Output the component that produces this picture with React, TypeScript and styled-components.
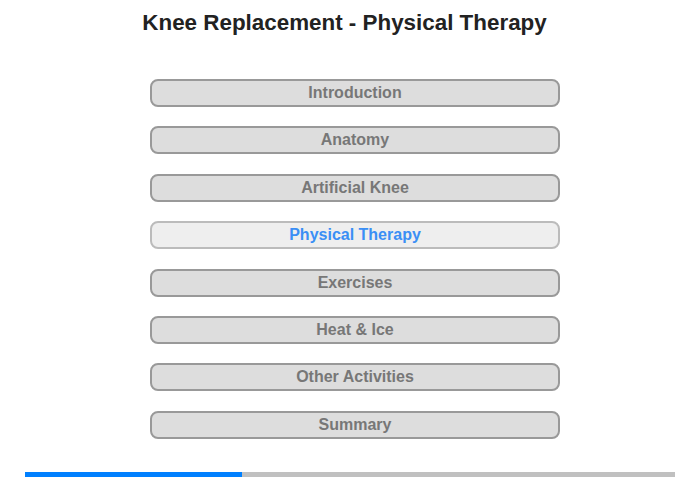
import styled, { createGlobalStyle } from 'styled-components'

const GlobalStyle = createGlobalStyle`
  body {
    margin: 0;
    background: #fff;
    font-family: "Liberation Sans", Arial, sans-serif;
  }
`

const Page = styled.div`
  width: 700px;
  height: 480px;
  display: flex;
  flex-direction: column;
  align-items: center;
`

const Title = styled.h1`
  margin: 9px 11px 0 0;
  font-size: 22.4px;
  line-height: 28px;
  font-weight: bold;
  color: #222;
`

const Menu = styled.nav`
  margin: 42px 0 0 10px;
  width: 410px;
  display: flex;
  flex-direction: column;
  gap: 19.4px;
`

const Item = styled.button<{ $active?: boolean }>`
  height: 28px;
  width: 100%;
  box-sizing: border-box;
  border: 2px solid ${props => (props.$active ? '#bbb' : '#999')};
  border-radius: 8px;
  background: ${props => (props.$active ? '#eee' : '#ddd')};
  color: ${props => (props.$active ? '#3a8ff5' : '#777')};
  font-family: "Liberation Sans", Arial, sans-serif;
  font-size: 16px;
  font-weight: bold;
  padding: 0;
  cursor: pointer;
`

const Progress = styled.div`
  margin-top: auto;
  margin-bottom: 3px;
  width: 650px;
  height: 5px;
  background: #c0c0c0;
`

const Fill = styled.div`
  height: 100%;
  background: #0080ff;
`

const sections = [
  'Introduction',
  'Anatomy',
  'Artificial Knee',
  'Physical Therapy',
  'Exercises',
  'Heat & Ice',
  'Other Activities',
  'Summary',
]

const current = 3

export default function App() {
  return (
    <>
      <GlobalStyle />
      <Page>
        <Title>Knee Replacement - Physical Therapy</Title>
        <Menu>
          {sections.map((s, i) => (
            <Item key={s} $active={i === current}>
              {s}
            </Item>
          ))}
        </Menu>
        <Progress>
          <Fill style={{ width: `${100 / 3}%` }} />
        </Progress>
      </Page>
    </>
  )
}
